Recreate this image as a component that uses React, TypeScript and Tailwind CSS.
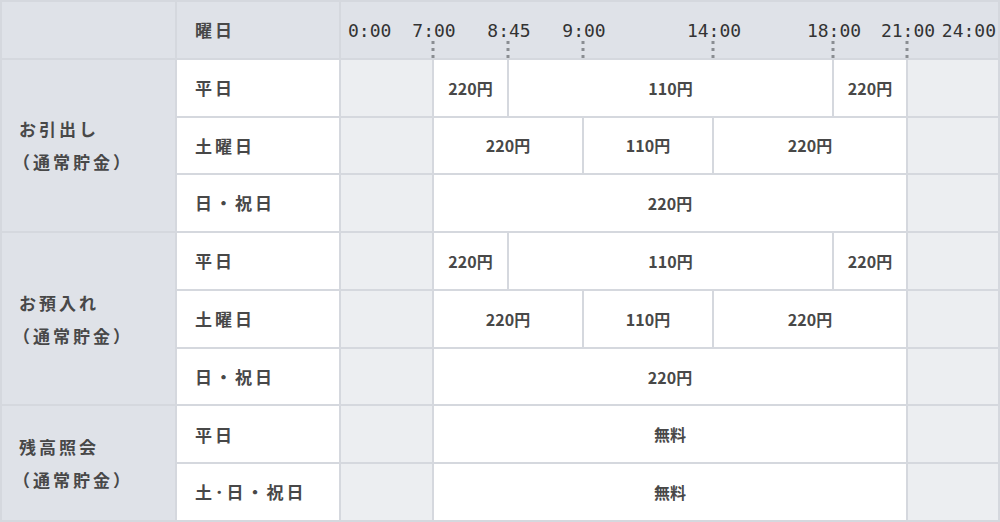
import React from "react";

type Seg = { label: string; span: string; blank?: boolean };

const TICKS = [
  { label: "7:00", at: 92 },
  { label: "8:45", at: 167 },
  { label: "9:00", at: 242 },
  { label: "14:00", at: 372 },
  { label: "18:00", at: 492 },
  { label: "21:00", at: 566 },
];

const WEEKDAY: Seg[] = [
  { label: "", span: "col-span-1", blank: true },
  { label: "220円", span: "col-span-1" },
  { label: "110円", span: "col-span-3" },
  { label: "220円", span: "col-span-1" },
  { label: "", span: "col-span-1", blank: true },
];

const SATURDAY: Seg[] = [
  { label: "", span: "col-span-1", blank: true },
  { label: "220円", span: "col-span-2" },
  { label: "110円", span: "col-span-1" },
  { label: "220円", span: "col-span-2" },
  { label: "", span: "col-span-1", blank: true },
];

const FLAT = (label: string): Seg[] => [
  { label: "", span: "col-span-1", blank: true },
  { label, span: "col-span-5" },
  { label: "", span: "col-span-1", blank: true },
];

const GROUPS = [
  {
    title: "お引出し",
    rows: [
      { day: "平日", segs: WEEKDAY },
      { day: "土曜日", segs: SATURDAY },
      { day: "日・祝日", segs: FLAT("220円") },
    ],
  },
  {
    title: "お預入れ",
    rows: [
      { day: "平日", segs: WEEKDAY },
      { day: "土曜日", segs: SATURDAY },
      { day: "日・祝日", segs: FLAT("220円") },
    ],
  },
  {
    title: "残高照会",
    rows: [
      { day: "平日", segs: FLAT("無料") },
      { day: "土･日・祝日", segs: FLAT("無料") },
    ],
  },
];

const jp = "font-['Noto_Sans_CJK_JP',sans-serif]";

function Timeline({ segs }: { segs: Seg[] }) {
  return (
    <div className="grid grid-cols-[91px_73px_73px_128px_118px_72px_90px] gap-[2px] bg-[#d5d8de]">
      {segs.map((s, i) => (
        <div
          key={i}
          className={`${s.span} ${
            s.blank ? "bg-[#eceef1]" : "bg-white"
          } flex items-center justify-center text-[16px] font-bold text-[#484848]`}
        >
          {s.label}
        </div>
      ))}
    </div>
  );
}

export default function App() {
  return (
    <div
      className={`w-[1000px] h-[522px] grid grid-cols-[173px_162px_657px] grid-rows-9 gap-[2px] p-[2px] bg-[#d5d8de] ${jp}`}
    >
      {/* Header */}
      <div className="bg-[#dfe2e8]" />
      <div className="bg-[#dfe2e8] flex items-center pl-[18px] text-[17px] font-bold tracking-[3px] text-[#484848]">
        曜日
      </div>
      <div className="relative bg-[#dfe2e8] font-['DejaVu_Sans_Mono',monospace] text-[18px] text-[#333]">
        <span className="absolute left-[7px] top-[15px]">0:00</span>
        {TICKS.map((t) => (
          <React.Fragment key={t.label}>
            <span
              className="absolute top-[15px] -translate-x-1/2"
              style={{ left: t.at + 1 }}
            >
              {t.label}
            </span>
            <div
              className="absolute bottom-0 flex flex-col gap-[4px] -translate-x-1/2"
              style={{ left: t.at }}
            >
              <span className="w-[3px] h-[3px] bg-[#8a8d92]" />
              <span className="w-[3px] h-[3px] bg-[#8a8d92]" />
              <span className="w-[3px] h-[3px] bg-[#8a8d92]" />
            </div>
          </React.Fragment>
        ))}
        <span className="absolute right-[2px] top-[15px]">24:00</span>
      </div>

      {/* Body */}
      {GROUPS.map((g) => (
        <React.Fragment key={g.title}>
          <div
            className={`${
              g.rows.length === 3 ? "row-span-3" : "row-span-2"
            } bg-[#dfe2e8] flex flex-col justify-center pl-[11px] text-[17px] font-bold tracking-[3px] leading-[33px] text-[#484848]`}
          >
            <span className="pl-[6px]">{g.title}</span>
            <span>（通常貯金）</span>
          </div>
          {g.rows.map((r, i) => (
            <React.Fragment key={i}>
              <div className="bg-white flex items-center pl-[18px] text-[17px] font-bold tracking-[3px] text-[#484848]">
                {r.day}
              </div>
              <Timeline segs={r.segs} />
            </React.Fragment>
          ))}
        </React.Fragment>
      ))}
    </div>
  );
}
